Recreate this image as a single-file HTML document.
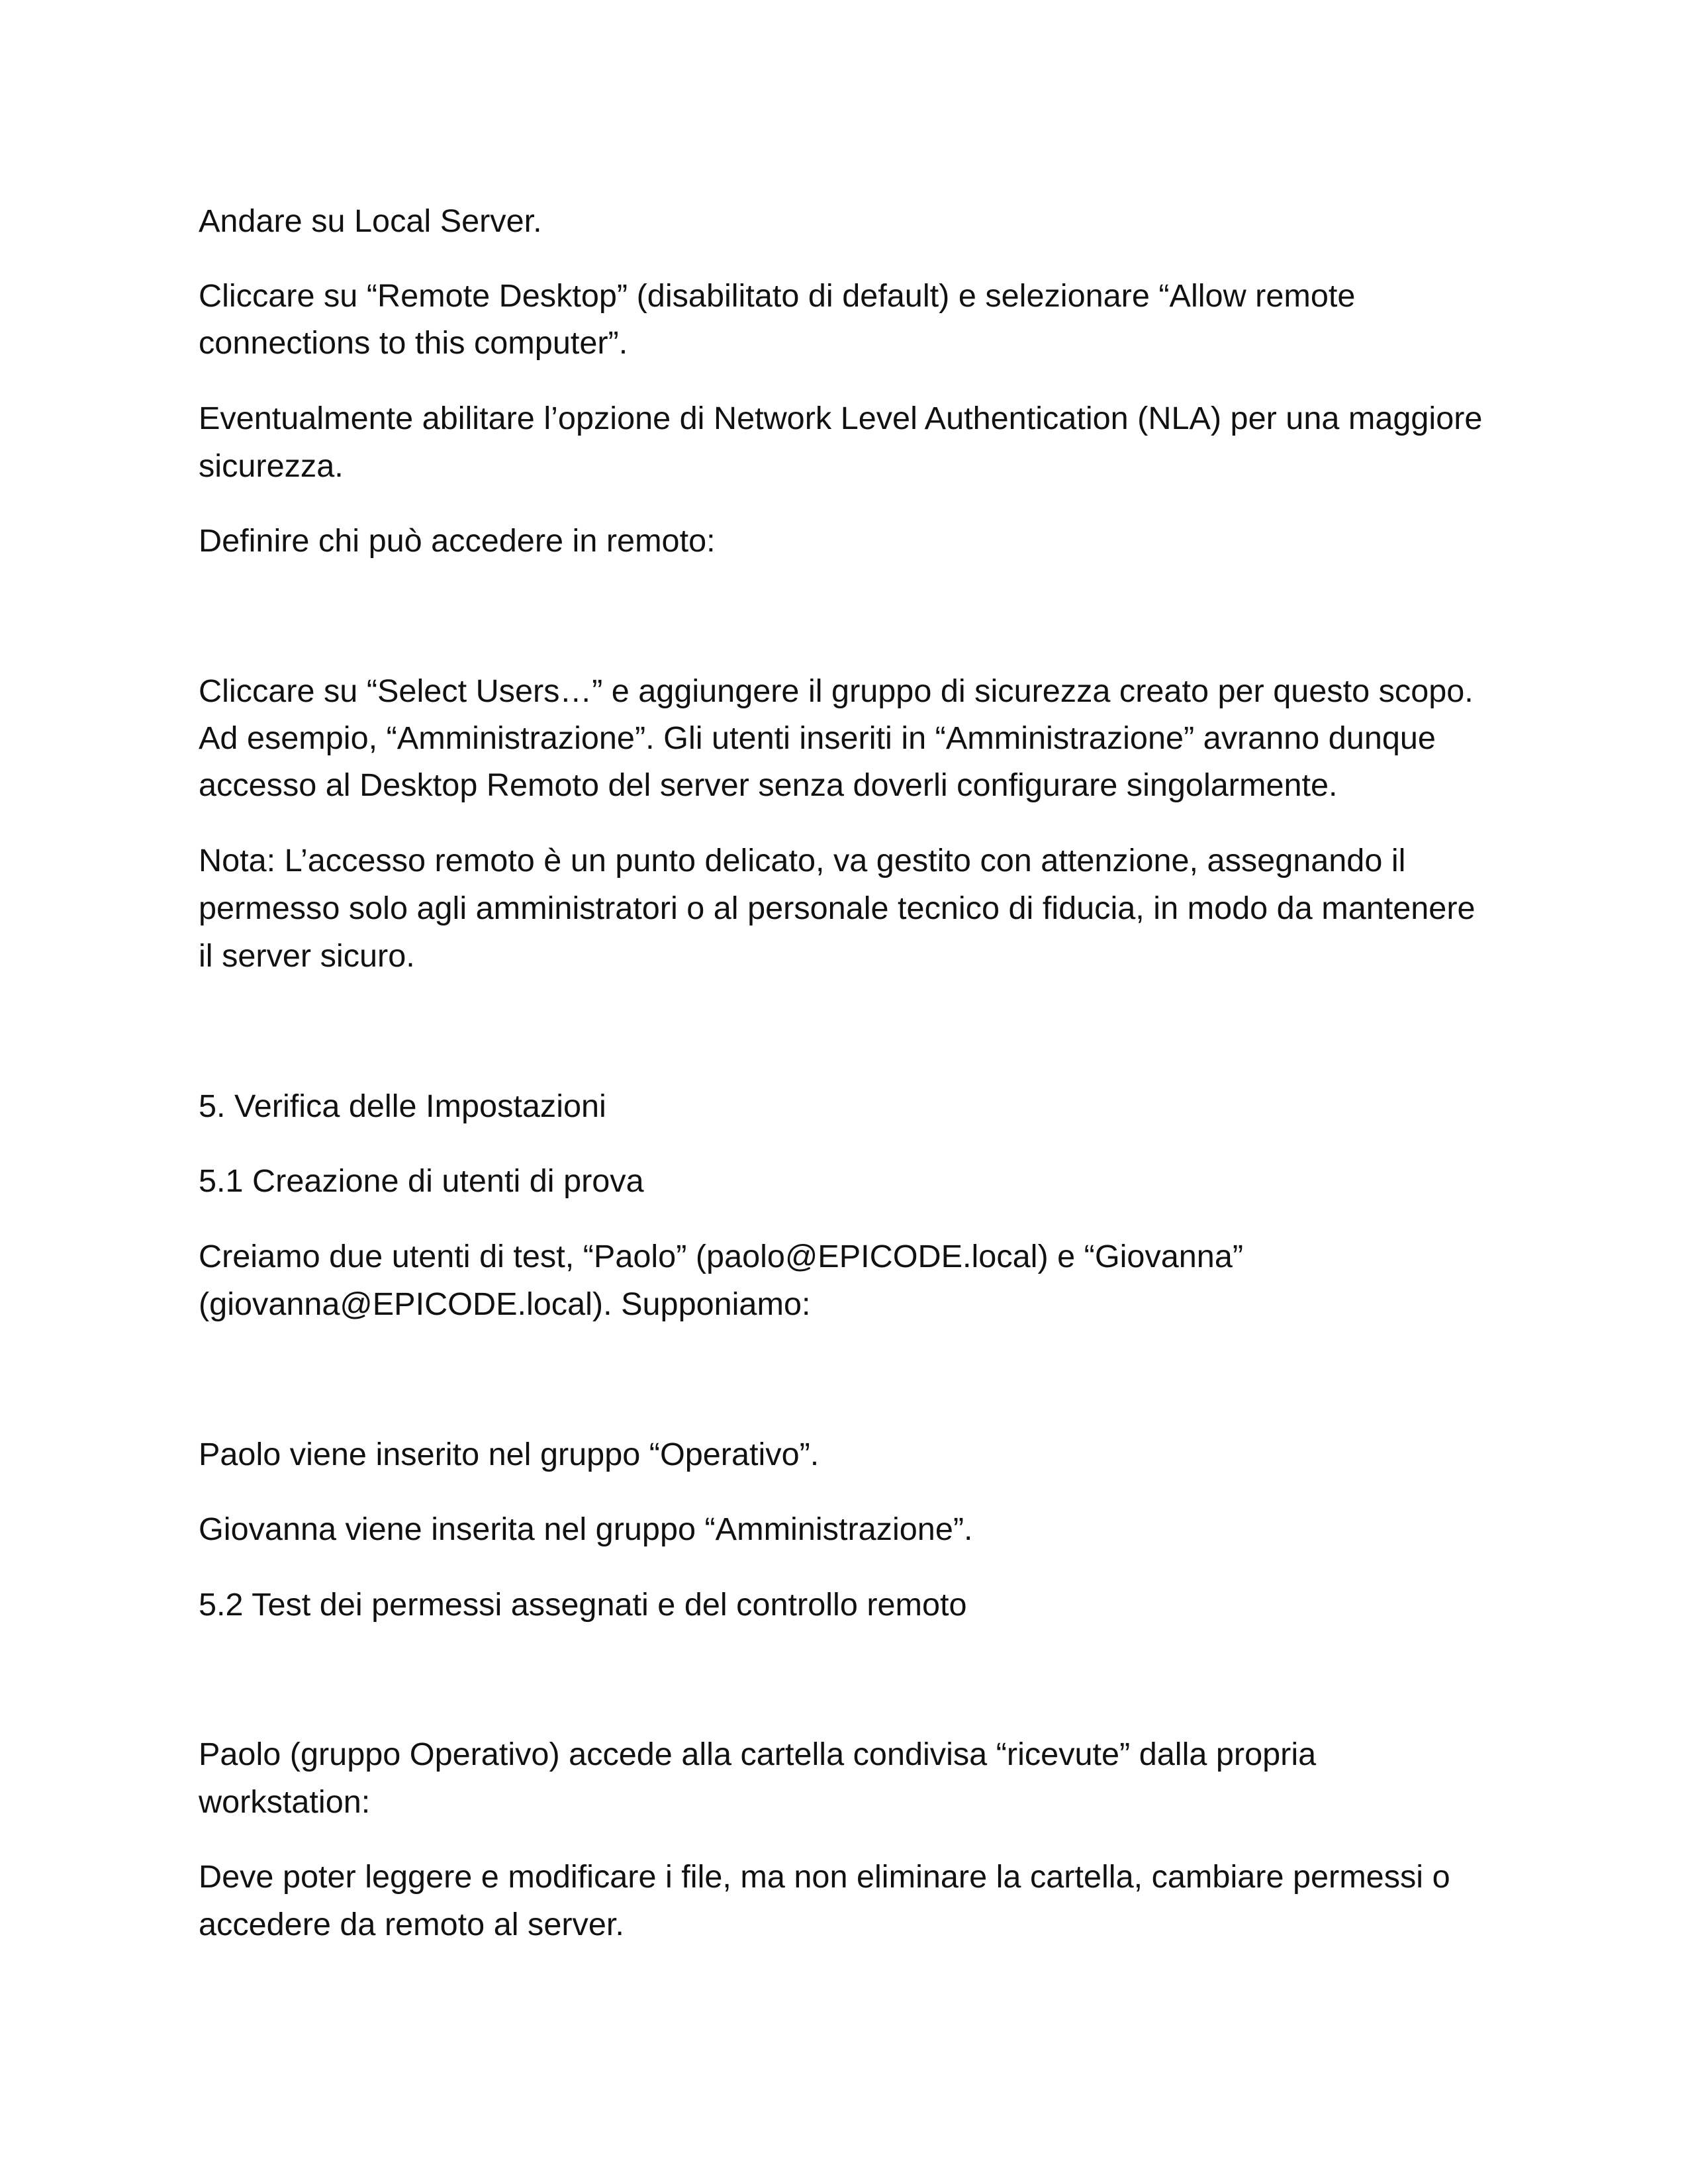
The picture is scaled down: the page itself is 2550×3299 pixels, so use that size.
<!DOCTYPE html>
<html><head><meta charset="utf-8"><style>
html,body{margin:0;padding:0;background:#fff;width:2550px;height:3299px;overflow:hidden}
.l{position:absolute;left:300px;font-family:"Liberation Sans","DejaVu Sans",sans-serif;font-size:48.6px;line-height:72px;height:72px;color:#111;white-space:nowrap}
</style></head><body>
<div class="l" style="top:298px">Andare su Local Server.</div>
<div class="l" style="top:411px">Cliccare su “Remote Desktop” (disabilitato di default) e selezionare “Allow remote</div>
<div class="l" style="top:482px">connections to this computer”.</div>
<div class="l" style="top:596px">Eventualmente abilitare l’opzione di Network Level Authentication (NLA) per una maggiore</div>
<div class="l" style="top:668px">sicurezza.</div>
<div class="l" style="top:781px">Definire chi può accedere in remoto:</div>
<div class="l" style="top:1008px">Cliccare su “Select Users…” e aggiungere il gruppo di sicurezza creato per questo scopo.</div>
<div class="l" style="top:1079px">Ad esempio, “Amministrazione”. Gli utenti inseriti in “Amministrazione” avranno dunque</div>
<div class="l" style="top:1150px">accesso al Desktop Remoto del server senza doverli configurare singolarmente.</div>
<div class="l" style="top:1264px">Nota: L’accesso remoto è un punto delicato, va gestito con attenzione, assegnando il</div>
<div class="l" style="top:1336px">permesso solo agli amministratori o al personale tecnico di fiducia, in modo da mantenere</div>
<div class="l" style="top:1408px">il server sicuro.</div>
<div class="l" style="top:1635px">5. Verifica delle Impostazioni</div>
<div class="l" style="top:1748px">5.1 Creazione di utenti di prova</div>
<div class="l" style="top:1862px">Creiamo due utenti di test, “Paolo” (paolo@EPICODE.local) e “Giovanna”</div>
<div class="l" style="top:1934px">(giovanna@EPICODE.local). Supponiamo:</div>
<div class="l" style="top:2161px">Paolo viene inserito nel gruppo “Operativo”.</div>
<div class="l" style="top:2274px">Giovanna viene inserita nel gruppo “Amministrazione”.</div>
<div class="l" style="top:2388px">5.2 Test dei permessi assegnati e del controllo remoto</div>
<div class="l" style="top:2614px">Paolo (gruppo Operativo) accede alla cartella condivisa “ricevute” dalla propria</div>
<div class="l" style="top:2686px">workstation:</div>
<div class="l" style="top:2799px">Deve poter leggere e modificare i file, ma non eliminare la cartella, cambiare permessi o</div>
<div class="l" style="top:2871px">accedere da remoto al server.</div>
</body></html>
